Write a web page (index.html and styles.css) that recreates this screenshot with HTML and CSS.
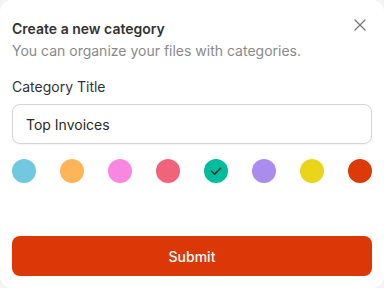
FILE: index.html
```html
<!DOCTYPE html>
<html>
<head>
<meta charset="utf-8">
<link rel="stylesheet" href="styles.css">
</head>
<body>
<div class="card">
  <div class="header">
    <div class="titles">
      <div class="title">Create a new category</div>
      <div class="subtitle">You can organize your files with categories.</div>
    </div>
    <button class="close" aria-label="Close">
      <svg width="12" height="12" viewBox="0 0 12 12"><path d="M1 1L11 11M11 1L1 11" stroke="#777" stroke-width="1.3" stroke-linecap="round"/></svg>
    </button>
  </div>
  <label class="label">Category Title</label>
  <div class="input">Top Invoices</div>
  <div class="colors">
    <span class="dot c1"></span>
    <span class="dot c2"></span>
    <span class="dot c3"></span>
    <span class="dot c4"></span>
    <span class="dot c5"><svg width="14" height="14" viewBox="0 0 14 14"><path d="M2.5 7.3L5.6 10.2L11.5 4.2" fill="none" stroke="#1f2a2a" stroke-width="1.5" stroke-linecap="round" stroke-linejoin="round"/></svg></span>
    <span class="dot c6"></span>
    <span class="dot c7"></span>
    <span class="dot c8"></span>
  </div>
  <button class="submit">Submit</button>
</div>
</body>
</html>
```
FILE: styles.css
```css
html, body {
  margin: 0;
  padding: 0;
  background: #f4f4f4;
}
body {
  font-family: Inter, "Noto Sans", sans-serif;
  width: 384px;
  height: 288px;
  overflow: hidden;
}
.card {
  box-sizing: border-box;
  width: 384px;
  height: 288px;
  background: #fff;
  border-radius: 12px;
  padding: 19px 12px 12px;
  display: flex;
  flex-direction: column;
}
.header {
  display: flex;
  justify-content: space-between;
  align-items: flex-start;
}
.title {
  font-size: 14px;
  font-weight: 600;
  color: #333;
  line-height: 20px;
}
.subtitle {
  font-size: 14px;
  color: #8a8a8a;
  line-height: 20px;
  margin-top: 2px;
}
.close {
  border: 0;
  background: none;
  padding: 0;
  margin: 0 6px 0 0;
  width: 12px;
  height: 12px;
  display: flex;
}
.label {
  margin-top: 16px;
  font-size: 14px;
  color: #333;
  line-height: 20px;
}
.input {
  margin-top: 7px;
  height: 40px;
  box-sizing: border-box;
  border: 1px solid #d6d6d6;
  border-radius: 8px;
  padding: 0 13px;
  display: flex;
  align-items: center;
  font-size: 14px;
  color: #2a2a2a;
  box-shadow: 0 1px 2px rgba(0,0,0,0.05);
}
.colors {
  margin-top: 15px;
  display: flex;
  justify-content: space-between;
}
.dot {
  width: 24px;
  height: 24px;
  border-radius: 50%;
  display: flex;
  align-items: center;
  justify-content: center;
}
.c1 { background: #70c9e1; }
.c2 { background: #ffb557; }
.c3 { background: #f987e1; }
.c4 { background: #f1627b; }
.c5 { background: #00bd9b; }
.c6 { background: #aa8cee; }
.c7 { background: #ebd51a; }
.c8 { background: #dc3a09; }
.submit {
  margin-top: auto;
  height: 40px;
  border: 0;
  border-radius: 8px;
  background: #dc3707;
  color: #fff;
  font-family: Inter, "Noto Sans", sans-serif;
  font-size: 14px;
  font-weight: 500;
}
```
